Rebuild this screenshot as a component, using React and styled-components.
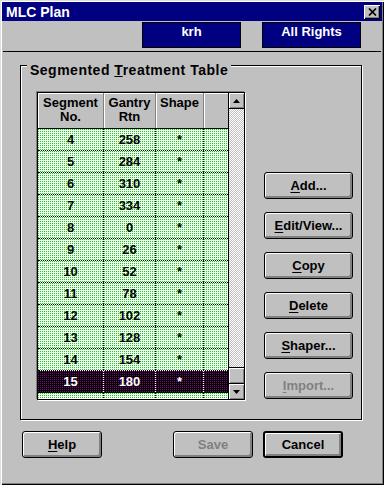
import React from 'react'
import styled, { createGlobalStyle, css } from 'styled-components'

const GlobalStyle = createGlobalStyle`
  html, body { margin: 0; padding: 0; background: #c0c0c0; }
  body { font-family: "Liberation Sans", Arial, sans-serif; }
`

const bevel = css`
  box-shadow: inset 1px 1px 0 #fff, inset -1px -1px 0 #808080;
`

// one coloured pixel in every 2x2 block, like the old 16-colour dithering
const dither = (dot, base) => css`
  background-color: ${base};
  background-image:
    linear-gradient(to bottom, transparent 1px, ${base} 1px),
    linear-gradient(to right, ${dot} 1px, ${base} 1px);
  background-size: 2px 2px;
`

const Window = styled.div`
  width: 384px;
  height: 485px;
  box-sizing: border-box;
  padding: 2px;
  background: #c0c0c0;
  box-shadow: inset 1px 1px 0 #dfdfdf, inset 2px 2px 0 #fff, inset -1px -1px 0 #000, inset -2px -2px 0 #808080;
  display: flex;
  flex-direction: column;
  font-family: "Liberation Sans", Arial, sans-serif;
  font-weight: bold;
  font-size: 13px;
  color: #000;
`

const TitleBar = styled.div`
  height: 19px;
  display: flex;
  align-items: center;
  justify-content: space-between;
  padding: 0 2px 0 4px;
  background: #000080;
  color: #fff;
  font-size: 14px;
`

const CloseButton = styled.div`
  width: 16px;
  height: 14px;
  box-sizing: border-box;
  display: flex;
  align-items: center;
  justify-content: center;
  background: #c0c0c0;
  box-shadow: inset 1px 1px 0 #fff, inset -1px -1px 0 #000, inset -2px -2px 0 #808080;
`

const InfoStrip = styled.div`
  height: 31px;
  box-sizing: border-box;
  margin: 0 1px;
  padding: 1px 20px 0 0;
  display: flex;
  justify-content: flex-end;
  gap: 21px;
  border-bottom: 1px solid #000;
`

const InfoBox = styled.div`
  width: 99px;
  height: 26px;
  box-sizing: border-box;
  padding-top: 1px;
  border: 1px solid #000;
  background: #000080;
  color: #fff;
  text-align: center;
  line-height: 15px;
`

const Body = styled.div`
  padding: 13px 20px 0 18px;
`

const GroupBox = styled.div`
  position: relative;
  height: 355px;
  box-sizing: border-box;
  border: 1px solid #000;
  box-shadow: 1px 1px 0 #fff, inset 1px 1px 0 #fff;
  padding: 26px 8px 19px 16px;
  display: flex;
  align-items: flex-end;
  justify-content: space-between;
`

const Legend = styled.span`
  position: absolute;
  top: -4px;
  left: 6px;
  padding: 0 3px;
  background: #c0c0c0;
  font-size: 14px;
  letter-spacing: 0.5px;
  line-height: 17px;
`

const TableFrame = styled.div`
  width: 208px;
  height: 308px;
  box-sizing: border-box;
  border: 1px solid #000;
  box-shadow: -1px -1px 0 #808080, 1px 1px 0 #fff;
  display: flex;
`

const Grid = styled.div`
  width: 190px;
  display: flex;
  flex-direction: column;
  overflow: hidden;
`

const columns = '66px 52px 48px 24px'

const HeaderRow = styled.div`
  display: grid;
  grid-template-columns: ${columns};
  height: 36px;
  flex: none;
  box-sizing: border-box;
  border-bottom: 1px solid #000;
`

const HeaderCell = styled.div`
  background: #c0c0c0;
  text-align: center;
  padding-top: 3px;
  line-height: 14px;
  box-sizing: border-box;
  box-shadow: inset 1px 1px 0 #fff;
  border-right: ${p => (p.$last ? 'none' : '1px solid #808080')};
`

const RowList = styled.div`
  flex: 1;
  overflow: hidden;
`

const Row = styled.div`
  display: grid;
  grid-template-columns: ${columns};
  height: 22px;
  box-sizing: border-box;
  border-bottom: 1px dotted #000;
  color: ${p => (p.$selected ? '#fff' : '#000')};
  ${p => (p.$selected ? dither('#800080', '#000') : dither('#00e000', '#fff'))}
`

const Cell = styled.div`
  display: flex;
  align-items: center;
  justify-content: center;
  line-height: 15px;
  border-right: ${p => (p.$last ? 'none' : `1px dotted ${p.$light ? '#fff' : '#000'}`)};
`

const Scrollbar = styled.div`
  width: 16px;
  box-sizing: border-box;
  border-left: 1px solid #000;
  display: flex;
  flex-direction: column;
`

const ArrowButton = styled.div`
  height: 16px;
  box-sizing: border-box;
  background: #c0c0c0;
  ${bevel}
  display: flex;
  align-items: center;
  justify-content: center;
  ${p => (p.$down ? 'border-top: 1px solid #000;' : 'border-bottom: 1px solid #000;')}
`

const Track = styled.div`
  flex: 1;
  background: repeating-conic-gradient(#c0c0c0 0 25%, #fff 0 50%) 0 0 / 2px 2px;
`

const Thumb = styled.div`
  height: 16px;
  box-sizing: border-box;
  border-top: 1px solid #000;
  background: #c0c0c0;
  ${bevel}
`

const ButtonColumn = styled.div`
  display: flex;
  flex-direction: column;
  gap: 13px;
  margin-bottom: 1px;
`

const WinButton = styled.button`
  width: ${p => p.$width}px;
  height: 27px;
  box-sizing: border-box;
  padding: 0;
  border: ${p => (p.$default ? '2px' : '1px')} solid #000;
  border-radius: 3px;
  background: #c0c0c0;
  box-shadow: inset 1px 1px 0 #fff, inset -2px -2px 0 #808080;
  font-family: "Liberation Sans", Arial, sans-serif;
  font-weight: bold;
  font-size: 13px;
  color: ${p => (p.disabled ? '#808080' : '#000')};
  u { text-decoration-thickness: 1px; text-underline-offset: 2px; }
`

const Footer = styled.div`
  display: flex;
  gap: 10px;
  padding: 11px 39px 0 20px;
  & > :first-child { margin-right: auto; }
`

const rows = [
  [4, 258], [5, 284], [6, 310], [7, 334], [8, 0], [9, 26],
  [10, 52], [11, 78], [12, 102], [13, 128], [14, 154], [15, 180], ['', ''],
]

const Arrow = ({ down }) => (
  <svg width="7" height="4" viewBox="0 0 7 4">
    <path d={down ? 'M0 0h7L3.5 4z' : 'M0 4h7L3.5 0z'} fill="#000" />
  </svg>
)

const App = () => {
  return (
    <Window>
      <GlobalStyle />
      <TitleBar>
        <span>MLC Plan</span>
        <CloseButton>
          <svg width="9" height="8" viewBox="0 0 9 8">
            <path d="M1 0.5L8 7.5M8 0.5L1 7.5" stroke="#000" strokeWidth="1.7" />
          </svg>
        </CloseButton>
      </TitleBar>
      <InfoStrip>
        <InfoBox>krh</InfoBox>
        <InfoBox>All Rights</InfoBox>
      </InfoStrip>
      <Body>
        <GroupBox>
          <Legend>Segmented <u>T</u>reatment Table</Legend>
          <TableFrame>
            <Grid>
              <HeaderRow>
                <HeaderCell>Segment<br />No.</HeaderCell>
                <HeaderCell>Gantry<br />Rtn</HeaderCell>
                <HeaderCell>Shape</HeaderCell>
                <HeaderCell $last />
              </HeaderRow>
              <RowList>
                {rows.map(([seg, rtn], i) => {
                  const selected = seg === 15
                  return (
                    <Row key={i} $selected={selected}>
                      <Cell $light={selected}>{seg}</Cell>
                      <Cell $light={selected}>{rtn}</Cell>
                      <Cell $light={selected}>{seg !== '' ? '*' : ''}</Cell>
                      <Cell $last />
                    </Row>
                  )
                })}
              </RowList>
            </Grid>
            <Scrollbar>
              <ArrowButton><Arrow /></ArrowButton>
              <Track />
              <Thumb />
              <ArrowButton $down><Arrow down /></ArrowButton>
            </Scrollbar>
          </TableFrame>
          <ButtonColumn>
            <WinButton $width={89}><u>A</u>dd...</WinButton>
            <WinButton $width={89}><u>E</u>dit/View...</WinButton>
            <WinButton $width={89}><u>C</u>opy</WinButton>
            <WinButton $width={89}><u>D</u>elete</WinButton>
            <WinButton $width={89}><u>S</u>haper...</WinButton>
            <WinButton $width={89} disabled><u>I</u>mport...</WinButton>
          </ButtonColumn>
        </GroupBox>
      </Body>
      <Footer>
        <WinButton $width={80}><u>H</u>elp</WinButton>
        <WinButton $width={80} disabled>Save</WinButton>
        <WinButton $width={80} $default>Cancel</WinButton>
      </Footer>
    </Window>
  )
}

export default App
